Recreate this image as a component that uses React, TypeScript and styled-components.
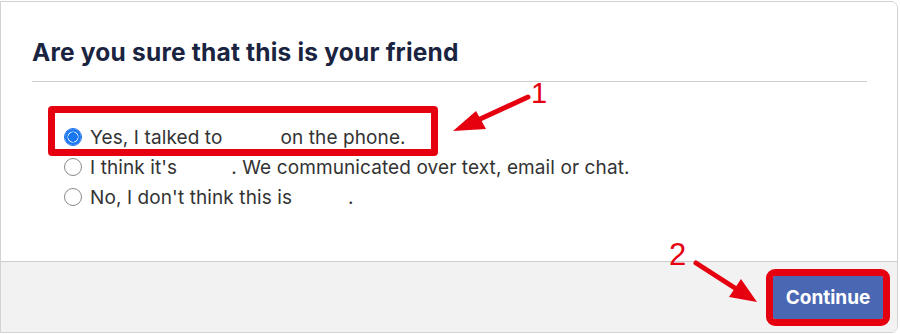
import styled, { createGlobalStyle } from "styled-components";

const GlobalStyle = createGlobalStyle`
  html, body {
    margin: 0;
    padding: 0;
    background: #ffffff;
  }
  body {
    font-family: Inter, "Liberation Sans", Arial, sans-serif;
  }
`;

const RED = "#e6000f";

const options = [
  { before: "Yes, I talked to", blank: 58, after: "on the phone.", checked: true },
  { before: "I think it's", blank: 54, after: ". We communicated over text, email or chat.", checked: false },
  { before: "No, I don't think this is", blank: 56, after: ".", checked: false },
];

const App = () => {
  return (
    <Page>
      <GlobalStyle />
      <Card>
        <Body>
          <Title>Are you sure that this is your friend</Title>
          <Divider />
          <OptionList>
            {options.map((opt, i) => (
              <OptionRow key={i}>
                <Radio checked={opt.checked} />
                <Label>
                  {opt.before}
                  <Blank $width={opt.blank} />
                  {opt.after}
                </Label>
                {i === 0 && <RowHighlight />}
              </OptionRow>
            ))}
          </OptionList>
        </Body>
        <Footer>
          <ContinueButton>Continue</ContinueButton>
        </Footer>
      </Card>

      <Annotations viewBox="0 0 900 334" width="900" height="334">
        <line x1="528" y1="97" x2="478" y2="120" stroke={RED} strokeWidth="5" strokeLinecap="round" />
        <polygon points="453,131 476,111 486,129" fill={RED} />
        <text x="531" y="103" fill={RED} fontSize="29" fontFamily="Liberation Sans, Arial, sans-serif">
          1
        </text>

        <line x1="696" y1="263" x2="738" y2="290" stroke={RED} strokeWidth="5" strokeLinecap="round" />
        <polygon points="757,302 729,297 741,279" fill={RED} />
        <text x="669" y="265" fill={RED} fontSize="31" fontFamily="Liberation Sans, Arial, sans-serif">
          2
        </text>
      </Annotations>
    </Page>
  );
};

export default App;

const Page = styled.div`
  position: relative;
  width: 900px;
  height: 334px;
  overflow: hidden;
`;

const Card = styled.div`
  box-sizing: border-box;
  margin-top: 1px;
  width: 898px;
  height: 332px;
  border: 1px solid #d2d2d2;
  border-radius: 0 7px 7px 0;
  display: flex;
  flex-direction: column;
  overflow: hidden;
`;

const Body = styled.div`
  flex: 1;
  padding: 35px 31px 0 31px;
  background: #ffffff;
`;

const Title = styled.h2`
  margin: 0;
  font-size: 24.5px;
  line-height: 30px;
  font-weight: 700;
  color: #1a2440;
  letter-spacing: 0.2px;
`;

const Divider = styled.div`
  height: 1px;
  margin-top: 14px;
  width: 835px;
  background: #cfcfcf;
`;

const OptionList = styled.div`
  margin-top: 40px;
  padding-left: 32px;
  display: flex;
  flex-direction: column;
`;

const OptionRow = styled.div`
  position: relative;
  display: flex;
  align-items: center;
  height: 30px;
  gap: 8px;
`;

const Radio = styled.span<{ checked: boolean }>`
  box-sizing: border-box;
  width: 18px;
  height: 18px;
  border-radius: 50%;
  flex-shrink: 0;
  border: ${(p) => (p.checked ? "1px solid #1a6ee8" : "1px solid #8a8a8a")};
  background: ${(p) =>
    p.checked
      ? "radial-gradient(circle, #1877f2 0 4.5px, #ffffff 5px 100%)"
      : "#ffffff"};
  box-shadow: ${(p) => (p.checked ? "inset 0 0 0 2.5px #1877f2" : "none")};
`;

const Label = styled.span`
  font-size: 19px;
  color: #333333;
  white-space: nowrap;
  letter-spacing: 0.1px;
`;

const Blank = styled.span<{ $width: number }>`
  display: inline-block;
  width: ${(p) => p.$width}px;
`;

const RowHighlight = styled.span`
  position: absolute;
  left: -16px;
  top: -16px;
  width: 390px;
  height: 50px;
  box-sizing: border-box;
  border: 7px solid ${RED};
  border-radius: 4px;
  pointer-events: none;
`;

const Footer = styled.div`
  height: 70px;
  flex-shrink: 0;
  border-top: 1px solid #cdcdcd;
  background: #f2f2f2;
  display: flex;
  align-items: center;
  justify-content: flex-end;
  padding-right: 14px;
`;

const ContinueButton = styled.button`
  width: 110px;
  height: 43px;
  padding: 0;
  border: none;
  border-radius: 2px;
  background: #4a67b3;
  color: #ffffff;
  font-family: Inter, "Liberation Sans", Arial, sans-serif;
  font-size: 19px;
  font-weight: 700;
  outline: 7px solid ${RED};
  outline-offset: 0;
  cursor: pointer;
`;

const Annotations = styled.svg`
  position: absolute;
  left: 0;
  top: 0;
  pointer-events: none;
`;
